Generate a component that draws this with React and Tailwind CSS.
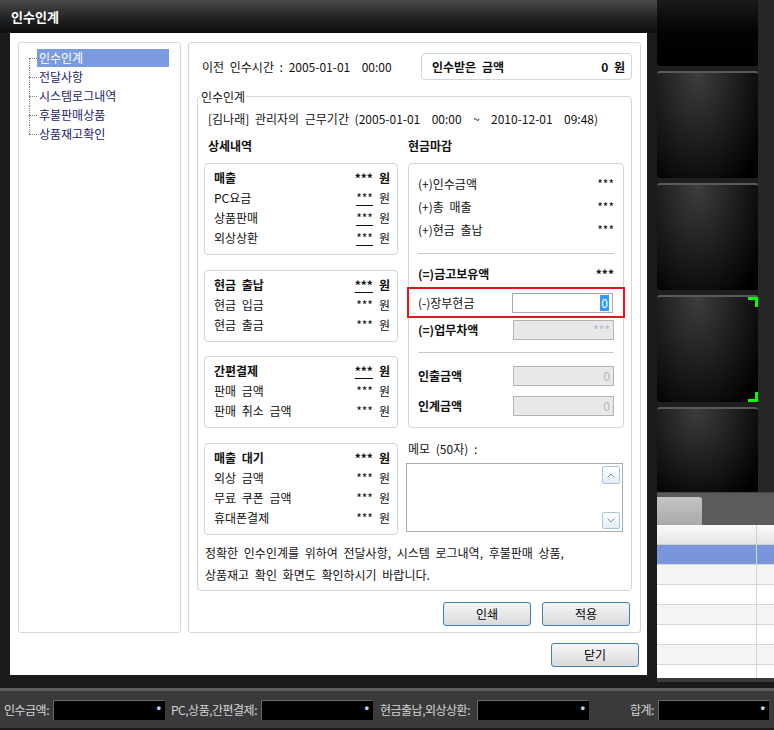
import React from 'react';

const F = "font-['Noto_Sans_CJK_KR','Noto_Sans',sans-serif]";

const treeItems = ['인수인계', '전달사항', '시스템로그내역', '후불판매상품', '상품재고확인'];

const Amount = ({ bold, under }) => (
  <div className={bold ? 'flex items-center gap-[6px] font-bold' : 'flex items-center gap-[6px]'}>
    <span className={under ? 'underline underline-offset-2' : ''}>***</span>
    <span>원</span>
  </div>
);

const DetailBox = ({ rows, h }) => (
  <div className={`${h} shrink-0 rounded-[4px] border border-[#cdd7de] pt-[4px] pl-[9px] pr-[7px]`}>
    {rows.map((r) => (
      <div key={r[0]} className="flex h-[20px] items-center justify-between">
        <span className={r[1] ? 'font-bold' : ''}>{r[0]}</span>
        <Amount bold={r[1]} under={r[2]} />
      </div>
    ))}
  </div>
);

const Field = ({ value, disabled, selected }) => (
  <div
    className={
      disabled
        ? 'w-[101px] h-[20px] border border-[#b4b4b4] bg-[#e8e8e8] flex items-center justify-end pr-[3px] text-[#a9b9d2]'
        : 'w-[101px] h-[20px] border border-[#a9a9a9] bg-white flex items-center justify-end pr-[3px]'
    }
  >
    {selected ? <span className="bg-[#3399ff] text-white px-[1px] leading-[16px]">{value}</span> : value}
  </div>
);

const Btn = ({ children }) => (
  <button className="w-[88px] h-[24px] rounded-[3px] border border-[#3c7fb1] bg-linear-to-b from-[#f7f7f7] to-[#d9d9d9] text-[12px] text-black">
    {children}
  </button>
);

const Tile = ({ h, green }) => (
  <div className={`relative shrink-0 ${h} rounded-[3px] border-t-2 border-[#5a5a5a] bg-[radial-gradient(ellipse_at_40%_0%,#3d3d3d,#000_90%)]`}>
    {green && (
      <>
        <div className="absolute right-0 top-0 w-[10px] h-[10px] border-t-[3px] border-r-[3px] border-[#00ff00]" />
        <div className="absolute right-0 bottom-0 w-[10px] h-[10px] border-b-[3px] border-r-[3px] border-[#00ff00]" />
      </>
    )}
  </div>
);

const BottomInput = ({ w }) => (
  <div className={`${w} h-[20px] bg-black border-t border-l border-[#6a6a6a] flex items-center justify-end pr-[4px]`}>
    <span className="text-[#d8ecff] text-[11px] font-bold leading-none">*</span>
  </div>
);

export default function App() {
  return (
    <div className={`w-[774px] h-[730px] overflow-hidden bg-[#1b1b1b] text-[12px] text-[#111] [word-spacing:3px] ${F}`}>
      <div className="flex h-[682px]">
        {/* dialog */}
        <div className="w-[657px] h-[682px] bg-[#1a1a1a] flex flex-col">
          <div className="h-[33px] shrink-0 bg-linear-to-b from-[#4a4a4a] via-[#262626] to-[#0d0d0d] flex items-center pl-[11px]">
            <span className="text-white text-[13px] font-bold">인수인계</span>
          </div>
          <div className="mx-[10px] h-[642px] shrink-0 bg-white flex flex-col">
            <div className="flex gap-[7px] pt-[9px] pl-[8px]">
              {/* tree */}
              <div className="w-[163px] h-[591px] rounded-[3px] border border-[#cfd9e0] pt-[6px] pl-[10px]">
                {treeItems.map((t, i) => (
                  <div key={t} className="flex h-[19px]">
                    <div className="w-[8px] flex flex-col">
                      <div className={i > 0 ? 'h-[9px] border-l border-dotted border-[#808080]' : 'h-[9px]'} />
                      <div
                        className={
                          i < 4
                            ? 'flex-1 border-t border-l border-dotted border-[#808080]'
                            : 'flex-1 border-t border-dotted border-[#808080]'
                        }
                      />
                    </div>
                    <div
                      className={
                        i === 0
                          ? 'w-[132px] h-[18px] leading-[18px] px-[2px] bg-[#7b9be0] text-white'
                          : 'w-[132px] h-[18px] leading-[18px] px-[2px] text-[#1c1c6c]'
                      }
                    >
                      {t}
                    </div>
                  </div>
                ))}
              </div>

              {/* main */}
              <div className="w-[453px] h-[591px] rounded-[3px] border border-[#cfd9e0] flex flex-col">
                <div className="mt-[10px] h-[27px] shrink-0 flex items-center pl-[13px] pr-[8px]">
                  <span className="whitespace-pre">이전 인수시간 : 2005-01-01  00:00</span>
                  <div className="ml-auto w-[211px] h-[27px] rounded-[4px] border border-[#cdd7de] flex items-center justify-between pl-[10px] pr-[6px] font-bold">
                    <span>인수받은 금액</span>
                    <span>0 원</span>
                  </div>
                </div>

                <fieldset className="mx-[8px] mt-[8px] h-[503px] shrink-0 rounded-[4px] border border-[#cdd7de] px-[6px]">
                  <legend className="-ml-[4px] px-[1px] leading-[17px]">인수인계</legend>
                  <div className="mt-[4px] h-[20px] flex items-center pl-[4px] whitespace-pre">
                    [김나래] 관리자의 근무기간 (2005-01-01  00:00  ~  2010-12-01  09:48)
                  </div>
                  <div className="mt-[7px] h-[20px] flex items-center font-bold">
                    <span className="pl-[4px] w-[204px]">상세내역</span>
                    <span>현금마감</span>
                  </div>

                  <div className="mt-[7px] flex gap-[10px]">
                    <div className="w-[194px] flex flex-col">
                      <DetailBox
                        h="h-[92px]"
                        rows={[
                          ['매출', true, false],
                          ['PC요금', false, true],
                          ['상품판매', false, true],
                          ['외상상환', false, true],
                        ]}
                      />
                      <div className="mt-[15px]">
                        <DetailBox
                          h="h-[72px]"
                          rows={[
                            ['현금 출납', true, true],
                            ['현금 입금', false, false],
                            ['현금 출금', false, false],
                          ]}
                        />
                      </div>
                      <div className="mt-[14px]">
                        <DetailBox
                          h="h-[72px]"
                          rows={[
                            ['간편결제', true, true],
                            ['판매 금액', false, false],
                            ['판매 취소 금액', false, false],
                          ]}
                        />
                      </div>
                      <div className="mt-[15px]">
                        <DetailBox
                          h="h-[92px]"
                          rows={[
                            ['매출 대기', true, false],
                            ['외상 금액', false, false],
                            ['무료 쿠폰 금액', false, false],
                            ['휴대폰결제', false, false],
                          ]}
                        />
                      </div>
                    </div>

                    <div className="w-[216px] flex flex-col">
                      <div className="h-[265px] shrink-0 rounded-[4px] border border-[#cdd7de] pt-[8px] pl-[9px] pr-[9px]">
                        {['(+)인수금액', '(+)총 매출', '(+)현금 출납'].map((l) => (
                          <div key={l} className="h-[23px] flex items-center justify-between">
                            <span>{l}</span>
                            <span>***</span>
                          </div>
                        ))}
                        <div className="mt-[12px] border-t border-[#c8c8c8]" />
                        <div className="mt-[10px] h-[20px] flex items-center justify-between font-bold">
                          <span>(=)금고보유액</span>
                          <span>***</span>
                        </div>
                        <div className="mt-[3px] -ml-[11px] -mr-[11px] h-[31px] border-2 border-[#e8141c] flex items-center justify-between pl-[9px] pr-[10px]">
                          <span>(-)장부현금</span>
                          <Field value="0" selected />
                        </div>
                        <div className="mt-[2px] h-[20px] flex items-center justify-between font-bold">
                          <span>(=)업무차액</span>
                          <div className="font-normal">
                            <Field value="***" disabled />
                          </div>
                        </div>
                        <div className="mt-[12px] border-t border-[#c8c8c8]" />
                        <div className="mt-[13px] h-[20px] flex items-center justify-between font-bold">
                          <span>인출금액</span>
                          <div className="font-normal">
                            <Field value="0" disabled />
                          </div>
                        </div>
                        <div className="mt-[10px] h-[20px] flex items-center justify-between font-bold">
                          <span>인계금액</span>
                          <div className="font-normal">
                            <Field value="0" disabled />
                          </div>
                        </div>
                      </div>
                      <div className="mt-[12px] h-[18px] flex items-center">메모 (50자) :</div>
                      <div className="mt-[5px] -ml-[2px] w-[217px] h-[69px] border border-[#ababab] flex justify-end pr-[2px] py-[2px]">
                        <div className="w-[18px] flex flex-col">
                          <div className="h-[18px] rounded-[2px] border border-[#a9c5dd] bg-linear-to-b from-white to-[#e4eef7] flex items-center justify-center">
                            <svg width="8" height="5" viewBox="0 0 8 5">
                              <path d="M0.5 4.5 L4 1 L7.5 4.5" fill="none" stroke="#7a8ea6" strokeWidth="1" />
                            </svg>
                          </div>
                          <div className="flex-1 bg-white" />
                          <div className="h-[17px] rounded-[2px] border border-[#a9c5dd] bg-linear-to-b from-white to-[#e4eef7] flex items-center justify-center">
                            <svg width="8" height="5" viewBox="0 0 8 5">
                              <path d="M0.5 0.5 L4 4 L7.5 0.5" fill="none" stroke="#7a8ea6" strokeWidth="1" />
                            </svg>
                          </div>
                        </div>
                      </div>
                    </div>
                  </div>

                  <div className="mt-[7px] pl-[1px] leading-[22px]">
                    <div>정확한 인수인계를 위하여 전달사항, 시스템 로그내역, 후불판매 상품,</div>
                    <div>상품재고 확인 화면도 확인하시기 바랍니다.</div>
                  </div>
                </fieldset>

                <div className="mt-[11px] flex justify-end gap-[11px] pr-[10px]">
                  <Btn>인쇄</Btn>
                  <Btn>적용</Btn>
                </div>
              </div>
            </div>
            <div className="mt-[10px] flex justify-end pr-[8px]">
              <Btn>닫기</Btn>
            </div>
          </div>
        </div>

        {/* right background */}
        <div className="w-[117px] h-[682px] flex flex-col">
          <div className="h-[492px] shrink-0 flex">
            <div className="w-[101px] flex flex-col gap-[5px] bg-[#1e1e1e]">
              <div className="h-[66px] shrink-0 rounded-b-[3px] bg-linear-to-b from-[#1a1a1a] to-[#000]" />
              <Tile h="h-[107px]" />
              <Tile h="h-[107px]" />
              <Tile h="h-[107px]" green />
              <Tile h="h-[85px]" />
            </div>
            <div className="flex-1 bg-[#262626]" />
          </div>
          <div className="h-[33px] shrink-0 bg-[#5b5b5b] border-t border-[#444] flex items-end">
            <div className="w-[45px] h-[28px] rounded-tr-[3px] bg-linear-to-b from-[#c4c4c4] to-[#a9a9a9]" />
          </div>
          <div className="h-[153px] shrink-0 overflow-hidden bg-white flex flex-col">
            <div className="h-[20px] shrink-0 flex bg-linear-to-b from-[#fafafa] to-[#e4e4e4] border-b border-[#cfcfcf]">
              <div className="w-[100px] border-r border-[#d0d0d0]" />
            </div>
            {['bg-[#7a95dc]', 'bg-[#f4f4f4]', 'bg-white', 'bg-[#f4f4f4]', 'bg-white', 'bg-[#f4f4f4]', 'bg-white'].map((c, i) => (
              <div key={i} className={`h-[20px] shrink-0 flex ${c} border-b border-[#d6d6d6]`}>
                <div className="w-[100px] border-r border-[#d6d6d6]" />
              </div>
            ))}
          </div>
          <div className="h-[4px] shrink-0 bg-[#3a3a3a]" />
        </div>
      </div>

      {/* bottom bar */}
      <div className="h-[48px] flex flex-col">
        <div className="h-[6px] bg-[#1a1a1a]" />
        <div className="h-[3px] bg-[#5c5c5c]" />
        <div className="h-[37px] bg-[#3a3a3c] flex items-center text-[#d4d4d4] pl-[4px] tracking-[-0.5px] [word-spacing:0px] whitespace-nowrap">
          <span className="w-[49px]">인수금액:</span>
          <BottomInput w="w-[112px]" />
          <span className="ml-[6px] w-[90px]">PC,상품,간편결제:</span>
          <BottomInput w="w-[112px]" />
          <span className="ml-[7px] w-[97px]">현금출납,외상상환:</span>
          <BottomInput w="w-[112px]" />
          <span className="ml-[41px] w-[28px]">합계:</span>
          <BottomInput w="w-[111px]" />
        </div>
        <div className="h-[2px] bg-[#1c1c1c]" />
      </div>
    </div>
  );
}
